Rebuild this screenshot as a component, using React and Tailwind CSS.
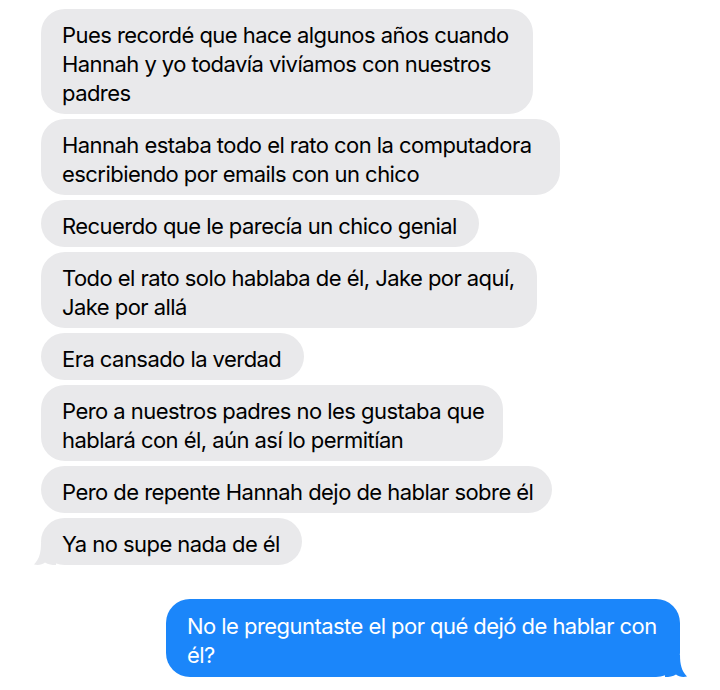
const incoming = [
  { w: "w-[492px]", lines: ["Pues recordé que hace algunos años cuando", "Hannah y yo todavía vivíamos con nuestros", "padres"] },
  { w: "w-[519px]", lines: ["Hannah estaba todo el rato con la computadora", "escribiendo por emails con un chico"] },
  { w: "w-[438px]", lines: ["Recuerdo que le parecía un chico genial"] },
  { w: "w-[496px]", lines: ["Todo el rato solo hablaba de él, Jake por aquí,", "Jake por allá"] },
  { w: "w-[263px]", lines: ["Era cansado la verdad"] },
  { w: "w-[462px]", lines: ["Pero a nuestros padres no les gustaba que", "hablará con él, aún así lo permitían"] },
  { w: "w-[511px]", lines: ["Pero de repente Hannah dejo de hablar sobre él"] },
  { w: "w-[261px]", lines: ["Ya no supe nada de él"], tail: true },
];

function Tail({ color, side }) {
  return (
    <svg
      viewBox="0 0 22 22"
      className={`absolute bottom-0 h-[22px] w-[22px] ${side === "left" ? "left-[-7px] -scale-x-100" : "right-[-7px]"}`}
    >
      <path d="M0 0 H15 C15 9 16.5 16 22 21.5 C17.5 22.5 13.5 21.5 11 19.5 C8 21.5 4 22 0 22 Z" fill={color} />
    </svg>
  );
}

function Bubble({ w, lines, tail }) {
  return (
    <div className={`relative ${w} rounded-[24px] bg-[#e9e9eb] pl-[21px] pt-[12px] pb-[6px] text-black`}>
      {lines.map((l, i) => (
        <div key={i} className="whitespace-nowrap">{l}</div>
      ))}
      {tail && <Tail color="#e9e9eb" side="left" />}
    </div>
  );
}

export default function App() {
  return (
    <div
      className="h-[690px] w-[720px] bg-white text-[22px] leading-[29px] tracking-[-0.55px]"
      style={{ fontFamily: "Inter, 'Liberation Sans', sans-serif" }}
    >
      <div className="flex flex-col gap-[5px] pl-[41px] pt-[9px]">
        {incoming.map((m, i) => (
          <Bubble key={i} {...m} />
        ))}
      </div>
      <div className="flex justify-end pr-[40px] pt-[34px]">
        <div className="relative w-[514px] rounded-[24px] bg-[#1b86fa] pl-[21px] pt-[13px] pb-[7px] text-white">
          <div className="whitespace-nowrap">No le preguntaste el por qué dejó de hablar con</div>
          <div className="whitespace-nowrap">él?</div>
          <Tail color="#1b86fa" side="right" />
        </div>
      </div>
    </div>
  );
}
